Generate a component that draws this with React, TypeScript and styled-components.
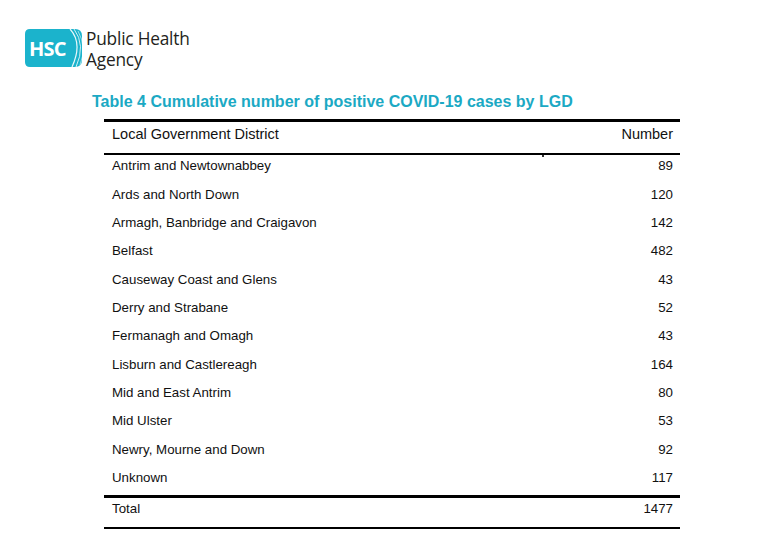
import React from "react";
import styled, { createGlobalStyle } from "styled-components";

const Global = createGlobalStyle`
  html, body { margin: 0; padding: 0; background: #ffffff; }
  body { font-family: "Liberation Sans", Arial, sans-serif; color: #111; }
`;

const Page = styled.div`
  width: 783px;
  height: 549px;
  box-sizing: border-box;
  padding: 29px 0 0 25px;
  overflow: hidden;
`;

const Brand = styled.div`
  display: flex;
  align-items: flex-start;
  gap: 3px;
`;

const BrandName = styled.div`
  font-family: "Open Sans", "Noto Sans", sans-serif;
  font-size: 17.3px;
  line-height: 21px;
  color: #231f20;
  letter-spacing: -0.2px;
  margin-top: -1px;
`;

const Title = styled.h1`
  margin: 23px 0 0 67px;
  font-family: "Liberation Sans", Arial, sans-serif;
  font-weight: bold;
  font-size: 16px;
  line-height: 17px;
  color: #1ba9c4;
`;

const Table = styled.div`
  margin: 9px 0 0 79px;
  width: 576px;
  border-top: 3px solid #000;
  border-bottom: 2px solid #000;
  position: relative;
`;

const Row = styled.div<{ $head?: boolean; $total?: boolean }>`
  display: flex;
  justify-content: space-between;
  padding: ${(p) => (p.$head ? "4px 7px 11px 8px" : p.$total ? "3px 7px 11px 8px" : "3.3px 7px 10.06px 8px")};
  font-size: ${(p) => (p.$head ? "14.5px" : "13.3px")};
  line-height: ${(p) => (p.$head ? "16px" : "15px")};
  color: #111;
  border-bottom: ${(p) => (p.$head ? "2px solid #000" : "none")};
  border-top: ${(p) => (p.$total ? "3px solid #000" : "none")};
`;

const Body = styled.div``;

const Tick = styled.span`
  position: absolute;
  left: 438px;
  top: 33px;
  width: 2px;
  height: 2px;
  background: #333;
`;

const rows: [string, number][] = [
  ["Antrim and Newtownabbey", 89],
  ["Ards and North Down", 120],
  ["Armagh, Banbridge and Craigavon", 142],
  ["Belfast", 482],
  ["Causeway Coast and Glens", 43],
  ["Derry and Strabane", 52],
  ["Fermanagh and Omagh", 43],
  ["Lisburn and Castlereagh", 164],
  ["Mid and East Antrim", 80],
  ["Mid Ulster", 53],
  ["Newry, Mourne and Down", 92],
  ["Unknown", 117],
];

const Logo = () => (
  <svg width="58" height="38" viewBox="0 0 58 38">
    <path d="M5 0 H50 Q57 0 57 7 V31 Q57 38 50 38 H5 Q0 38 0 33 V5 Q0 0 5 0 Z" fill="#1bb3cc" />
    <path d="M45 0 Q58 14 47 38" stroke="#fff" strokeWidth="1.2" fill="none" opacity="0.9" />
    <path d="M49 0 Q61 16 51 38" stroke="#fff" strokeWidth="1" fill="none" opacity="0.8" />
    <path d="M53 2 Q62 18 55 36" stroke="#fff" strokeWidth="0.8" fill="none" opacity="0.7" />
    <text x="4" y="26.5" fontFamily="'Open Sans', 'Noto Sans', sans-serif" fontWeight="bold" fontSize="20" fill="#fff" letterSpacing="-0.8">HSC</text>
  </svg>
);

export default function App() {
  return (
    <Page>
      <Global />
      <Brand>
        <Logo />
        <BrandName>
          Public Health
          <br />
          Agency
        </BrandName>
      </Brand>
      <Title>Table 4 Cumulative number of positive COVID-19 cases by LGD</Title>
      <Table>
        <Row $head>
          <span>Local Government District</span>
          <span>Number</span>
        </Row>
        <Tick />
        <Body>
          {rows.map(([name, n]) => (
            <Row key={name}>
              <span>{name}</span>
              <span>{n}</span>
            </Row>
          ))}
        </Body>
        <Row $total>
          <span>Total</span>
          <span>1477</span>
        </Row>
      </Table>
    </Page>
  );
}
